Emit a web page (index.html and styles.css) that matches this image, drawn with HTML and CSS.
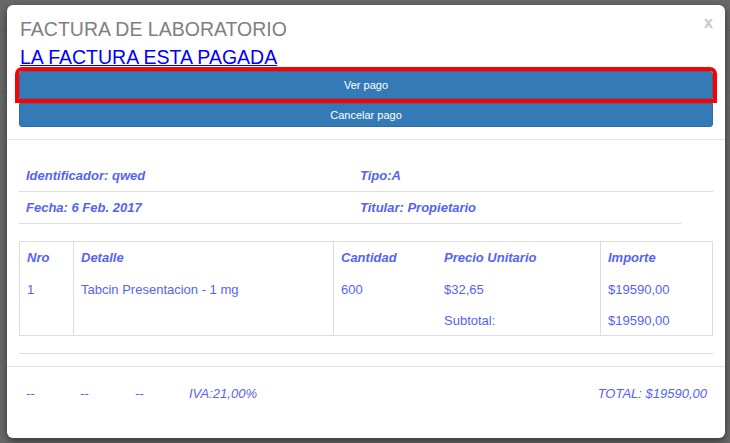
FILE: index.html
```html
<!DOCTYPE html>
<html lang="es">
<head>
<meta charset="utf-8">
<title>Factura de laboratorio</title>
<link rel="stylesheet" href="styles.css">
</head>
<body>
<div class="modal">
  <div class="modal-header">
    <span class="close">x</span>
    <h4 class="title">FACTURA DE LABORATORIO</h4>
    <a class="status" href="#">LA FACTURA ESTA PAGADA</a>
    <div class="btn-group">
      <button class="btn btn-main">Ver pago</button>
      <button class="btn btn-cancel">Cancelar pago</button>
    </div>
  </div>
  <div class="modal-body">
    <div class="info">
      <div class="info-row row-full">
        <span>Identificador: qwed</span>
        <span>Tipo:A</span>
      </div>
      <div class="info-row row-short">
        <span>Fecha: 6 Feb. 2017</span>
        <span>Titular: Propietario</span>
      </div>
    </div>
    <div class="grid-table">
      <div class="cell th bd">Nro</div>
      <div class="cell th bd">Detalle</div>
      <div class="cell th">Cantidad</div>
      <div class="cell th bd">Precio Unitario</div>
      <div class="cell th">Importe</div>

      <div class="cell bd">1</div>
      <div class="cell bd">Tabcin Presentacion - 1 mg</div>
      <div class="cell">600</div>
      <div class="cell bd">$32,65</div>
      <div class="cell">$19590,00</div>

      <div class="cell bd"></div>
      <div class="cell bd"></div>
      <div class="cell"></div>
      <div class="cell bd">Subtotal:</div>
      <div class="cell">$19590,00</div>
    </div>
    <div class="rule"></div>
  </div>
  <div class="modal-footer">
    <span class="f-col">--</span>
    <span class="f-col f-col2">--</span>
    <span class="f-col">--</span>
    <span class="f-iva">IVA:21,00%</span>
    <span class="f-total">TOTAL: $19590,00</span>
  </div>
</div>
</body>
</html>
```
FILE: styles.css
```css
* { box-sizing: border-box; }

html, body { height: 100%; }

body {
  margin: 0;
  overflow: hidden;
  background-color: #696969;
  background-image:
    linear-gradient(to bottom, transparent 30px, #5e5e5e 30px, #5e5e5e 31px, transparent 31px),
    linear-gradient(to bottom, transparent 92px, #616161 92px, #616161 93px, transparent 93px),
    linear-gradient(to bottom, transparent 108px, #626262 108px, #626262 109px, transparent 109px);
  font-family: "Liberation Sans", Arial, sans-serif;
  padding-top: 5px;
}

.modal {
  position: relative;
  margin-left: 7px;
  width: 718px;
  background: #fff;
  border-radius: 6px;
  box-shadow: 0 3px 9px rgba(0, 0, 0, 0.5);
}

.modal-header {
  padding: 13px 12px 12px 12px;
  border-bottom: 1px solid #e5e5e5;
}

.close {
  position: absolute;
  top: 10px;
  right: 12px;
  font-size: 16px;
  line-height: 16px;
  font-weight: bold;
  color: #c6c6c6;
}

.title {
  margin: 0;
  font-size: 19.5px;
  line-height: 22px;
  font-weight: normal;
  color: #7f7f7f;
  padding-left: 1px;
}

.status {
  display: block;
  margin-top: 6px;
  font-size: 19.5px;
  line-height: 22px;
  color: #0000ff;
  text-decoration: underline;
  padding-left: 1px;
}

.btn-group {
  display: flex;
  flex-direction: column;
  margin-top: 3px;
}

.btn {
  display: block;
  width: 100%;
  margin: 0;
  padding: 0;
  background: #337ab7;
  border: 1px solid #2e6da4;
  color: #fff;
  font-family: "Liberation Sans", Arial, sans-serif;
  font-size: 11px;
  text-align: center;
}

.btn-main {
  height: 28px;
  border-radius: 3px 3px 0 0;
  outline: 4px solid #ff0000;
}

.btn-cancel {
  height: 24px;
  margin-top: 4px;
  border-radius: 0 0 3px 3px;
}

.modal-body {
  padding: 20px 12px 12px 12px;
  color: #5563f3;
  font-size: 13px;
  line-height: 15px;
}

.info-row {
  display: grid;
  grid-template-columns: 334px 1fr;
  padding: 8px 7px;
  border-bottom: 1px solid #dddddd;
  font-weight: bold;
  font-style: italic;
}

.row-short { width: 662px; }

.grid-table {
  margin-top: 17px;
  border: 1px solid #dddddd;
  display: grid;
  grid-template-columns: 54px 260px 103px 164px 1fr;
  grid-template-rows: 32px 31px 30px;
}

.cell {
  padding: 8px 7px 0 7px;
}

.cell.bd { border-right: 1px solid #dddddd; }

.th {
  font-weight: bold;
  font-style: italic;
}

.rule {
  margin-top: 17px;
  border-top: 1px solid #dddddd;
}

.modal-footer {
  display: flex;
  border-top: 1px solid #e5e5e5;
  padding: 19px 18px 37px 12px;
  color: #5563f3;
  font-size: 13px;
  line-height: 15px;
  font-style: italic;
}

.f-col {
  width: 54px;
  padding-left: 7px;
}

.f-col2 { width: 55px; }

.f-iva { padding-left: 7px; }

.f-total { margin-left: auto; }
```
